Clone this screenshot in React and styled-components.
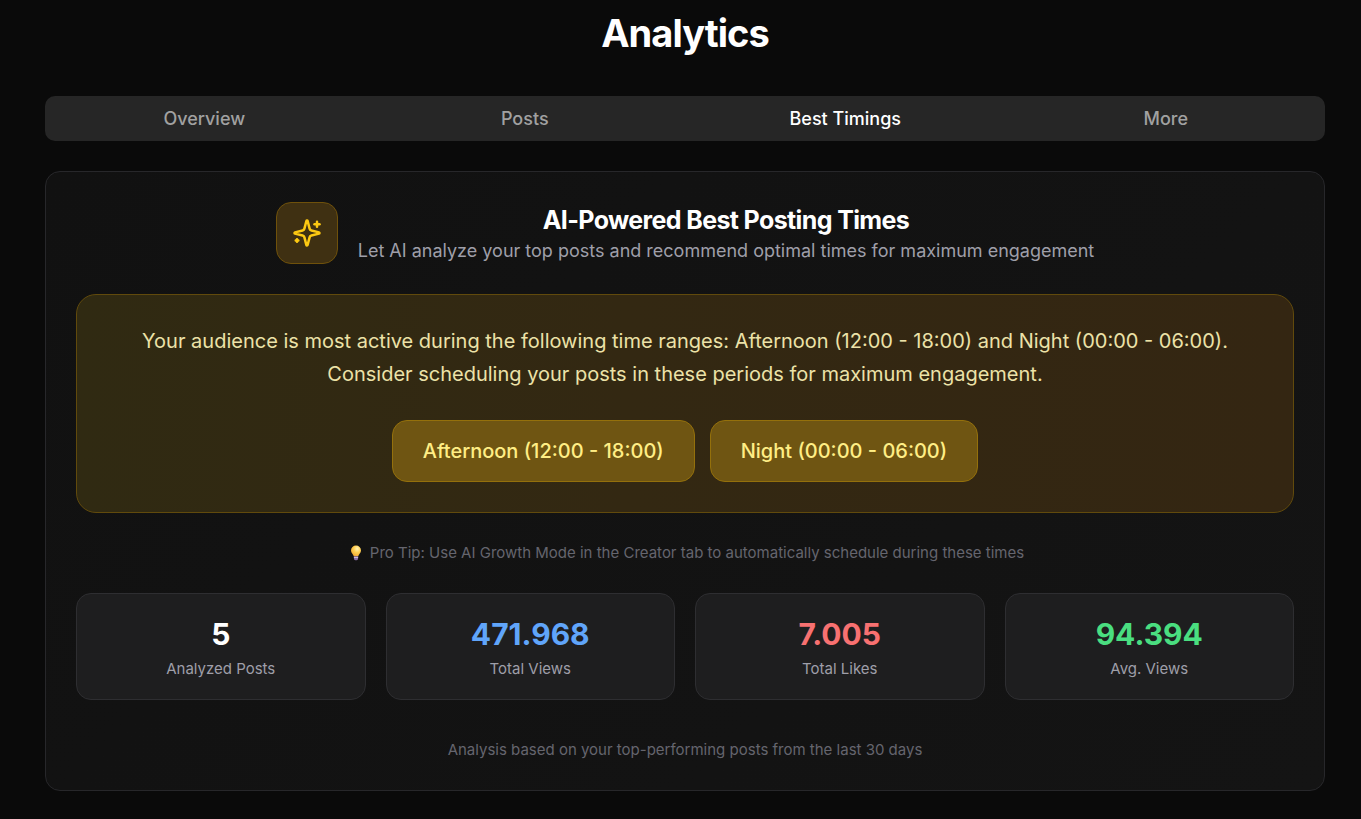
import React, { useState } from "react";
import styled, { createGlobalStyle } from "styled-components";

const GlobalStyle = createGlobalStyle`
  *, *::before, *::after { box-sizing: border-box; }
  body {
    margin: 0;
    background: #0a0a0a;
    color: #ffffff;
    font-family: Inter, "Liberation Sans", sans-serif;
  }
  h1, h2, p, dl, dd, dt { margin: 0; }
`;

const Page = styled.main`
  display: flex;
  flex-direction: column;
  gap: 30px;
  padding: 11px 36px 28px 45px;
`;

const PageTitle = styled.h1`
  margin-bottom: 10px;
  font-size: 38px;
  line-height: 45px;
  font-weight: 700;
  letter-spacing: -0.025em;
  text-align: center;
`;

const TabBar = styled.nav`
  display: flex;
  gap: 2px;
  border-radius: 10px;
  background: #262626;
`;

const Tab = styled.button`
  flex: 1;
  height: 45px;
  padding: 0;
  border: 0;
  background: transparent;
  color: ${(p) => (p.$active ? "#ffffff" : "#a1a1a1")};
  font-family: inherit;
  font-size: 18px;
  font-weight: 500;
  cursor: pointer;
`;

const Card = styled.section`
  display: flex;
  flex-direction: column;
  padding: 30px;
  border: 1px solid #27272a;
  border-radius: 15px;
  background: linear-gradient(135deg, #111111, #141414);
`;

const CardHeader = styled.header`
  display: flex;
  align-items: center;
  justify-content: center;
  gap: 20px;
`;

const IconTile = styled.div`
  display: flex;
  padding: 15px;
  border: 1px solid #6f510b;
  border-radius: 15px;
  background: #3f3012;
  color: #fdc912;
`;

const HeaderText = styled.div`
  text-align: center;
`;

const CardTitle = styled.h2`
  font-size: 25px;
  line-height: 35px;
  font-weight: 700;
  letter-spacing: -0.025em;
`;

const Subtitle = styled.p`
  color: #9f9fa9;
  font-size: 18px;
  line-height: 25px;
`;

const Recommendation = styled.div`
  display: flex;
  flex-direction: column;
  gap: 29px;
  margin-top: 30px;
  padding: 30px;
  border: 1px solid #614a0c;
  border-radius: 20px;
  background: linear-gradient(90deg, #302a12, #332812 45%, #342612);
`;

const Message = styled.p`
  color: #ece2a8;
  font-size: 20px;
  line-height: 33px;
  font-weight: 400;
  text-align: center;
`;

const Ranges = styled.div`
  display: flex;
  flex-wrap: wrap;
  justify-content: center;
  gap: 15px;
`;

const Range = styled.div`
  padding: 15px 30px;
  border: 1px solid #94700b;
  border-radius: 15px;
  background: #6f5512;
  color: #ffee85;
  font-size: 20px;
  line-height: 30px;
  font-weight: 500;
`;

const Note = styled.p`
  display: flex;
  align-items: center;
  justify-content: center;
  gap: 6px;
  margin-top: ${(p) => p.$space}px;
  color: #65656e;
  font-size: 15px;
  line-height: 20px;
`;

const Stats = styled.dl`
  display: grid;
  grid-template-columns: repeat(4, 1fr);
  gap: 20px;
  margin-top: 30px;
`;

const Stat = styled.div`
  display: flex;
  flex-direction: column-reverse;
  gap: 5px;
  padding: 20px;
  border: 1px solid #2e2e31;
  border-radius: 15px;
  background: #1e1e1f;
  text-align: center;
`;

const StatLabel = styled.dt`
  color: #9f9fa9;
  font-size: 15px;
  line-height: 20px;
`;

const StatValue = styled.dd`
  color: ${(p) => p.$color};
  font-size: 30px;
  line-height: 40px;
  font-weight: 700;
`;

function SparklesIcon() {
  return (
    <svg width="30" height="30" viewBox="0 0 24 24" fill="none" stroke="currentColor" strokeWidth="2" strokeLinecap="round" strokeLinejoin="round" aria-hidden="true">
      <path d="M9.937 15.5A2 2 0 0 0 8.5 14.063l-6.135-1.582a.5.5 0 0 1 0-.962L8.5 9.936A2 2 0 0 0 9.937 8.5l1.582-6.135a.5.5 0 0 1 .963 0L14.063 8.5A2 2 0 0 0 15.5 9.937l6.135 1.581a.5.5 0 0 1 0 .964L15.5 14.063a2 2 0 0 0-1.437 1.437l-1.582 6.135a.5.5 0 0 1-.963 0z" />
      <path d="M20 3v4" />
      <path d="M22 5h-4" />
      <path d="M4 17v2" />
      <path d="M5 18H3" />
    </svg>
  );
}

function BulbIcon() {
  return (
    <svg width="18" height="16" viewBox="0 0 18 16" aria-hidden="true">
      <defs>
        <radialGradient id="bulb" cx="0.62" cy="0.3" r="0.75">
          <stop offset="0" stopColor="#fff3b8" />
          <stop offset="0.45" stopColor="#ffd052" />
          <stop offset="1" stopColor="#f0a52e" />
        </radialGradient>
      </defs>
      <path d="M10 .5a5 5 0 0 0-5 5c0 2.600 2.300 3.600 2.900 6h4.200c.600-2.400 2.900-3.400 2.900-6a5 5 0 0 0-5-5z" fill="url(#bulb)" />
      <path d="M7.900 11.300h4.200v2.300a1.600 1.600 0 0 1-1.600 1.700h-1a1.600 1.600 0 0 1-1.600-1.700z" fill="#8b6fa8" />
      <path d="M7.900 12h4.200v1H7.900z" fill="#cbbbd6" />
    </svg>
  );
}

const tabs = ["Overview", "Posts", "Best Timings", "More"];
const ranges = ["Afternoon (12:00 - 18:00)", "Night (00:00 - 06:00)"];
const stats = [
  { label: "Analyzed Posts", value: "5", color: "#ffffff" },
  { label: "Total Views", value: "471.968", color: "#60a5fa" },
  { label: "Total Likes", value: "7.005", color: "#f87171" },
  { label: "Avg. Views", value: "94.394", color: "#4ade80" },
];

export default function App() {
  const [active, setActive] = useState("Best Timings");
  return (
    <>
      <GlobalStyle />
      <Page>
        <PageTitle>Analytics</PageTitle>
        <TabBar>
          {tabs.map((tab) => (
            <Tab key={tab} type="button" $active={tab === active} onClick={() => setActive(tab)}>
              {tab}
            </Tab>
          ))}
        </TabBar>
        <Card>
          <CardHeader>
            <IconTile>
              <SparklesIcon />
            </IconTile>
            <HeaderText>
              <CardTitle>AI-Powered Best Posting Times</CardTitle>
              <Subtitle>Let AI analyze your top posts and recommend optimal times for maximum engagement</Subtitle>
            </HeaderText>
          </CardHeader>
          <Recommendation>
            <Message>
              Your audience is most active during the following time ranges: Afternoon (12:00 - 18:00) and Night (00:00 - 06:00). Consider scheduling your posts in these periods for maximum engagement.
            </Message>
            <Ranges>
              {ranges.map((range) => (
                <Range key={range}>{range}</Range>
              ))}
            </Ranges>
          </Recommendation>
          <Note $space={30}>
            <BulbIcon />
            Pro Tip: Use AI Growth Mode in the Creator tab to automatically schedule during these times
          </Note>
          <Stats>
            {stats.map((stat) => (
              <Stat key={stat.label}>
                <StatLabel>{stat.label}</StatLabel>
                <StatValue $color={stat.color}>{stat.value}</StatValue>
              </Stat>
            ))}
          </Stats>
          <Note $space={40}>Analysis based on your top-performing posts from the last 30 days</Note>
        </Card>
      </Page>
    </>
  );
}
